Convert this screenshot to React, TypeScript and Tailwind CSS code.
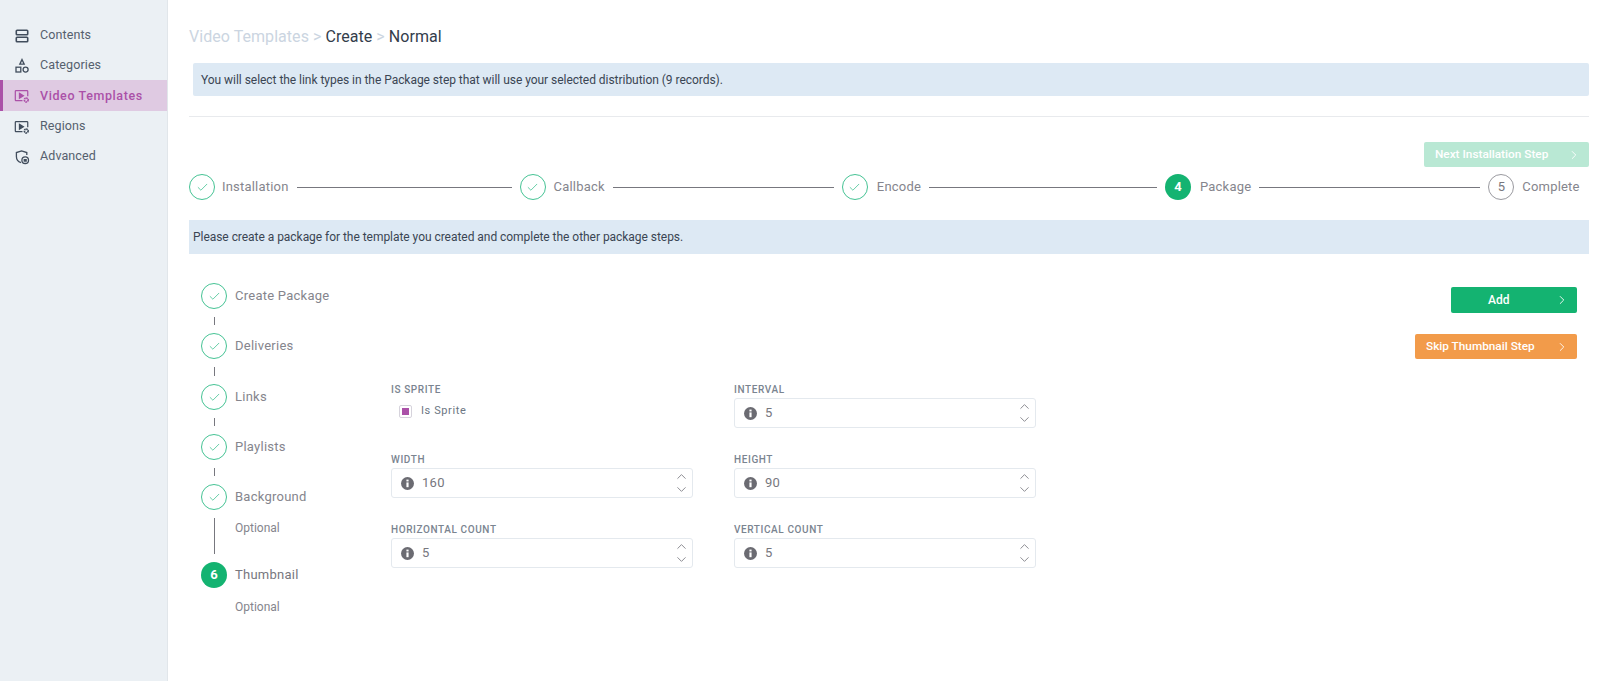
import { ChevronRight, ChevronUp, ChevronDown, Check } from "lucide-react"

const font = { fontFamily: "Roboto, sans-serif" }

function ContentsIcon() {
  return (
    <svg width="16" height="16" viewBox="0 0 16 16" fill="none" stroke="currentColor" strokeWidth="1.6">
      <rect x="2.3" y="2.2" width="11.4" height="4.6" rx="0.8" />
      <rect x="2.3" y="9.2" width="11.4" height="4.6" rx="0.8" />
    </svg>
  )
}

function CategoriesIcon() {
  return (
    <svg width="16" height="16" viewBox="0 0 16 16" fill="none" stroke="currentColor" strokeWidth="1.3">
      <path d="M8 1.6 10.2 6.2H5.8Z" />
      <rect x="2" y="9.2" width="4.8" height="4.8" />
      <circle cx="11.6" cy="11.6" r="2.5" />
    </svg>
  )
}

function VideoGearIcon() {
  return (
    <svg width="17" height="16" viewBox="0 0 17 16" fill="none" stroke="currentColor" strokeWidth="1.3">
      <path d="M9 13H2.2a.8.8 0 0 1-.8-.8V3a.8.8 0 0 1 .8-.8h11.6a.8.8 0 0 1 .8.8v5.2" />
      <path d="M5.8 5.2 10 7.8 5.8 10.4Z" fill="currentColor" />
      <circle cx="13" cy="12.2" r="2" strokeWidth="1.8" strokeDasharray="1.6 0.5" />
    </svg>
  )
}

function AdvancedIcon() {
  return (
    <svg width="16" height="16" viewBox="0 0 16 16" fill="none" stroke="currentColor" strokeWidth="1.3">
      <path d="M7 13.6C4.2 12.6 2.4 10.4 2.4 7.4V3.6L7.6 2l5.2 1.6V6" />
      <circle cx="11.2" cy="11.2" r="3.3" />
      <path d="M9.6 10.6h3.2M9.6 12h3.2" />
    </svg>
  )
}

function InfoIcon() {
  return (
    <svg width="13" height="13" viewBox="0 0 12 12" className="shrink-0">
      <circle cx="6" cy="6" r="6" fill="#6b6b72" />
      <rect x="5" y="5" width="2" height="4.4" fill="#fff" />
      <rect x="5" y="2.4" width="2" height="1.7" fill="#fff" />
    </svg>
  )
}

function DoneCircle() {
  return (
    <div className="flex h-[26px] w-[26px] shrink-0 items-center justify-center rounded-full border border-[#45c394] bg-white">
      <Check className="h-[13px] w-[13px] text-[#45c394]" strokeWidth={1.5} />
    </div>
  )
}

function NavItem({ icon, label, active }: { icon: React.ReactNode; label: string; active?: boolean }) {
  return (
    <div
      className={
        active
          ? "flex h-[31px] items-center gap-[10px] border-l-[3px] border-[#ab51a8] bg-[#dfcae2] pl-[11px] pt-px text-[12.5px] font-medium tracking-[0.6px] text-[#ab51a8]"
          : "flex h-[30px] items-center gap-[10px] pl-[14px] pt-px text-[12.5px] tracking-[0.1px] text-[#55606e]"
      }
    >
      <span className={active ? "flex w-[16px] justify-center" : "flex w-[16px] justify-center text-[#414d5c]"}>{icon}</span>
      {label}
    </div>
  )
}

function TopStep({ label, num, state, gap, line }: { label: string; num?: number; state: "done" | "active" | "todo"; gap: string; line?: string }) {
  return (
    <>
      <div className={gap}>
        {state === "done" && <DoneCircle />}
        {state === "active" && (
          <div className="flex h-[26px] w-[26px] shrink-0 items-center justify-center rounded-full bg-[#14b371] text-[13px] font-bold text-white">
            {num}
          </div>
        )}
        {state === "todo" && (
          <div className="flex h-[26px] w-[26px] shrink-0 items-center justify-center rounded-full border border-[#9a9aa0] text-[13px] text-[#77777e]">
            {num}
          </div>
        )}
        <span className="text-[13px] tracking-[0.2px] text-[#85858d]">{label}</span>
      </div>
      {line && <div className={line} />}
    </>
  )
}

function SideStep({ label, optional, connector }: { label: string; optional?: boolean; connector?: string }) {
  return (
    <div>
      <div className="flex h-[26px] items-center gap-[8px]">
        <DoneCircle />
        <span className="text-[13px] tracking-[0.25px] text-[#85858d]">{label}</span>
      </div>
      <div className={connector}>
        <div className="ml-[12.5px] h-full w-px bg-[#77777e]" />
        {optional && <span className="absolute left-[34px] top-[9px] text-[12px] text-[#85858d]">Optional</span>}
      </div>
    </div>
  )
}

function NumberField({ label, value }: { label: string; value: string }) {
  return (
    <div>
      <div className="mb-[2px] h-[13px] pt-px text-[10px] font-medium leading-[12px] tracking-[0.6px] text-[#7a8490]">{label}</div>
      <div className="flex h-[30px] items-center rounded-[3px] border border-[#e4e9ee] pl-[9px] pr-[3px]">
        <InfoIcon />
        <span className="ml-[8px] flex-1 text-[13px] tracking-[0.3px] text-[#77777e]">{value}</span>
        <div className="flex flex-col text-[#85858c]">
          <ChevronUp className="h-[15px] w-[15px]" strokeWidth={1.5} />
          <ChevronDown className="-mt-[2px] h-[15px] w-[15px]" strokeWidth={1.5} />
        </div>
      </div>
    </div>
  )
}

export default function App() {
  return (
    <div className="flex h-[681px] w-[1600px] overflow-hidden bg-white" style={font}>
      <aside className="h-full w-[168px] shrink-0 border-r border-[#e1e6ea] bg-[#ebf0f4] pt-[20px]">
        <NavItem icon={<ContentsIcon />} label="Contents" />
        <NavItem icon={<CategoriesIcon />} label="Categories" />
        <NavItem icon={<VideoGearIcon />} label="Video Templates" active />
        <NavItem icon={<VideoGearIcon />} label="Regions" />
        <NavItem icon={<AdvancedIcon />} label="Advanced" />
      </aside>

      <main className="min-w-0 flex-1 pl-[21px] pr-[11px]">
        <div className="mt-[27px] h-[20px] text-[16px] leading-[20px] tracking-[0.05px]">
          <span className="text-[#cbd5e1]">Video Templates &gt; </span>
          <span className="text-[#333d4b]">Create</span>
          <span className="text-[#cbd5e1]"> &gt; </span>
          <span className="text-[#333d4b]">Normal</span>
        </div>

        <div className="ml-[4px] mt-[16px] flex h-[33px] items-center rounded-[2px] bg-[#dde9f4] px-[8px] text-[12px] tracking-[-0.04px] text-[#3a4553]">
          You will select the link types in the Package step that will use your selected distribution (9 records).
        </div>

        <div className="mt-[20px] h-px bg-[#e8eaed]" />

        <div className="mt-[25px] flex justify-end">
          <button type="button" className="flex h-[25px] w-[165px] items-center justify-between rounded-[2px] bg-[#b9e8d4] pl-[11px] pr-[8px] text-[11.8px] font-medium text-white">
            Next Installation Step
            <ChevronRight className="h-[14px] w-[14px]" strokeWidth={1.5} />
          </button>
        </div>

        <div className="mt-[7px] flex items-center">
          <TopStep label="Installation" state="done" gap="flex items-center gap-[7px]" line="mx-[8px] h-px w-[215px] bg-[#77777e]" />
          <TopStep label="Callback" state="done" gap="flex items-center gap-[8px]" line="mx-[8px] h-px w-[221px] bg-[#77777e]" />
          <TopStep label="Encode" state="done" gap="flex items-center gap-[9px]" line="mx-[8px] h-px w-[228px] bg-[#77777e]" />
          <TopStep label="Package" num={4} state="active" gap="flex items-center gap-[9px]" line="mx-[8px] h-px w-[221px] bg-[#77777e]" />
          <TopStep label="Complete" num={5} state="todo" gap="flex items-center gap-[8px]" />
        </div>

        <div className="mt-[20px] flex h-[34px] items-center bg-[#dde9f4] px-[4px] text-[12px] tracking-[-0.04px] text-[#3a4553]">
          Please create a package for the template you created and complete the other package steps.
        </div>

        <div className="mt-[29px] flex">
          <div className="ml-[12px] w-[190px] shrink-0">
            <SideStep label="Create Package" connector="flex h-[24px] py-[8px]" />
            <SideStep label="Deliveries" connector="flex h-[25px] py-[8px]" />
            <SideStep label="Links" connector="flex h-[24px] py-[8px]" />
            <SideStep label="Playlists" connector="flex h-[24px] py-[8px]" />
            <SideStep label="Background" optional connector="relative h-[52px] py-[8px]" />
            <div className="flex h-[26px] items-center gap-[8px]">
              <div className="flex h-[26px] w-[26px] shrink-0 items-center justify-center rounded-full bg-[#14b371] text-[13px] font-bold text-white">6</div>
              <span className="text-[13px] tracking-[0.25px] text-[#77777e]">Thumbnail</span>
            </div>
            <div className="ml-[34px] mt-[10px] text-[12px] text-[#85858d]">Optional</div>
          </div>

          <div className="min-w-0 flex-1">
            <div className="flex items-start">
              <div className="mt-[100px] grid w-[645px] grid-cols-2 gap-x-[41px] gap-y-[25px]">
                <div className="h-[45px]">
                  <div className="mb-[2px] h-[13px] pt-px text-[10px] font-medium leading-[12px] tracking-[0.6px] text-[#7a8490]">IS SPRITE</div>
                  <div className="ml-[8px] mt-[7px] flex items-center">
                    <span className="flex h-[13px] w-[13px] items-center justify-center rounded-[2px] border border-[#d6d3dc]">
                      <span className="h-[7px] w-[7px] bg-[#ab51a8]" />
                    </span>
                    <span className="ml-[9px] text-[11px] tracking-[0.6px] text-[#6c7683]">Is Sprite</span>
                  </div>
                </div>
                <NumberField label="INTERVAL" value="5" />
                <NumberField label="WIDTH" value="160" />
                <NumberField label="HEIGHT" value="90" />
                <NumberField label="HORIZONTAL COUNT" value="5" />
                <NumberField label="VERTICAL COUNT" value="5" />
              </div>
              <div className="ml-auto mr-[12px] mt-[4px] flex flex-col items-end gap-[21px]">
                <button type="button" className="flex h-[26px] w-[126px] items-center justify-between rounded-[2px] bg-[#14b371] pl-[37px] pr-[8px] text-[12px] font-medium text-white">
                  Add
                  <ChevronRight className="h-[14px] w-[14px]" strokeWidth={1.5} />
                </button>
                <button type="button" className="flex h-[25px] w-[162px] items-center justify-between rounded-[2px] bg-[#f29b4a] pl-[11px] pr-[8px] text-[11.8px] font-medium text-white">
                  Skip Thumbnail Step
                  <ChevronRight className="h-[14px] w-[14px]" strokeWidth={1.5} />
                </button>
              </div>
            </div>
          </div>
        </div>
      </main>
    </div>
  )
}
